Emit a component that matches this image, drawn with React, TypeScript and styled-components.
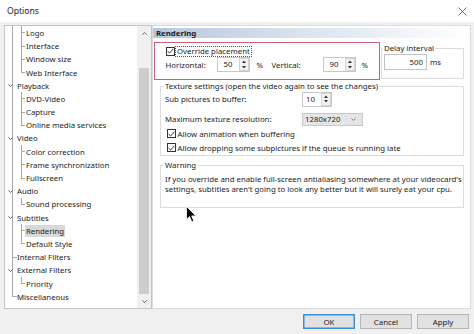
import React from 'react';
import styled, { createGlobalStyle } from 'styled-components';

const FONT = `"Noto Sans", "Open Sans", sans-serif`;
const LINE = '#a9a9a9';

const GlobalStyle = createGlobalStyle`
  *, *::before, *::after { box-sizing: border-box; }
  html, body { margin: 0; padding: 0; background: #f0f0f0; }
  body { font-family: ${FONT}; }
`;

const Window = styled.div`
  position: relative;
  width: 474px;
  height: 334px;
  background: #f0f0f0;
  display: flex;
  flex-direction: column;
  overflow: hidden;
  font-family: ${FONT};
  font-size: 7.8px;
  color: #1c1c1c;
`;

const TitleBar = styled.div`
  flex: none;
  height: 22px;
  background: #fff;
  display: flex;
  align-items: center;
  justify-content: space-between;
  padding: 0 7px 0 7px;
`;

const Title = styled.span`
  font-size: 8.6px;
  color: #222;
`;

const Body = styled.div`
  flex: none;
  height: 287px;
  display: flex;
  padding: 3px 5px 0 4px;
`;

/* ---------- tree ---------- */
const Tree = styled.div`
  flex: none;
  width: 148px;
  height: 100%;
  background: #fff;
  border: 1px solid #c4c4c4;
  display: flex;
`;

const TreeList = styled.div`
  flex: 1;
  padding-top: 0.4px;
  overflow: hidden;
`;

const Row = styled.div`
  height: 13.2px;
  display: flex;
  align-items: center;
  white-space: nowrap;
`;

const RootGuide = styled.span<{ $end?: boolean; $tick?: boolean }>`
  flex: none;
  width: 12px;
  height: 100%;
  display: flex;
  align-items: center;
  padding-left: 3px;
  background: ${p => (p.$tick ? `linear-gradient(${LINE},${LINE}) no-repeat 7px 50% / 5px 1px,` : '')}
    linear-gradient(${LINE}, ${LINE}) no-repeat 7px 0 / 1px ${p => (p.$end ? '50%' : '100%')};
`;

const ChildGuide = styled.span<{ $end?: boolean }>`
  flex: none;
  width: 9px;
  height: 100%;
  background: linear-gradient(${LINE}, ${LINE}) no-repeat 4px 50% / 4px 1px,
    linear-gradient(${LINE}, ${LINE}) no-repeat 4px 0 / 1px ${p => (p.$end ? '50%' : '100%')};
`;

const NodeLabel = styled.span<{ $sel?: boolean }>`
  margin-left: -1px;
  padding: 0 1px;
  line-height: 12px;
  background: ${p => (p.$sel ? '#d9d9d9' : 'transparent')};
  color: #1c1c1c;
`;

const ScrollBar = styled.div`
  flex: none;
  width: 14px;
  background: #f0f0f0;
  display: flex;
  flex-direction: column;
`;

const ScrollArrow = styled.div`
  flex: none;
  height: 14px;
  display: flex;
  align-items: center;
  justify-content: center;
`;

const ScrollTrack = styled.div`
  flex: 1;
  display: flex;
  flex-direction: column;
  padding: 28px 2px 0 2px;
`;

const ScrollThumb = styled.div`
  flex: 1;
  background: #cdcdcd;
`;

/* ---------- page ---------- */
const Page = styled.div`
  flex: 1;
  height: 100%;
  background: #fff;
  border: 1px solid #dcdcdc;
  padding-top: 2px;
  display: flex;
  flex-direction: column;
`;

const PageHeader = styled.div`
  height: 10px;
  padding-left: 3px;
  line-height: 10px;
  font-weight: bold;
  color: #1a1a28;
  background: linear-gradient(to right, #b8c7db 0%, #d9e2ee 45%, #ffffff 100%);
`;

const PageContent = styled.div`
  padding: 4px 6px 0 1px;
  display: flex;
  flex-direction: column;
`;

const TopRow = styled.div`
  display: flex;
  align-items: flex-start;
`;

const HighlightBox = styled.div`
  flex: none;
  width: 226px;
  height: 37.5px;
  border: 1.5px solid #c8607a;
  padding: 3px 0 0 10.5px;
  display: flex;
  flex-direction: column;
`;

const CheckLine = styled.div<{ $h?: number }>`
  height: ${p => p.$h ?? 10}px;
  display: flex;
  align-items: center;
  gap: 1.5px;
`;

const FocusText = styled.span`
  outline: 1px dotted #555;
  outline-offset: 0;
  padding: 0 1px;
  line-height: 9px;
`;

const PlacementRow = styled.div`
  margin-top: 1px;
  height: 15px;
  display: grid;
  grid-template-columns: 51px 33px 22px 51px 33px auto;
  align-items: center;
`;

const UnitLabel = styled.span<{ $pad?: number }>`
  padding-left: ${p => p.$pad ?? 7}px;
`;

const Group = styled.fieldset<{ $ml?: number; $mt?: number; $w?: number; $pl?: number }>`
  margin: ${p => p.$mt ?? 0}px 0 0 ${p => p.$ml ?? 0}px;
  ${p => (p.$w ? `width: ${p.$w}px; flex: none;` : '')}
  padding: 0 0 0 ${p => p.$pl ?? 4}px;
  border: 1px solid #dcdcdc;
  min-width: 0;
`;

const Legend = styled.legend<{ $lh?: number }>`
  padding: 0 1px;
  margin-left: -1px;
  line-height: ${p => p.$lh ?? 11}px;
  color: #1c1c1c;
`;

const DelayRow = styled.div`
  margin-top: 1px;
  height: 16px;
  margin-bottom: 8px;
  display: flex;
  align-items: center;
  gap: 3px;
`;

const TextBox = styled.div<{ $w: number }>`
  width: ${p => p.$w}px;
  height: 16px;
  border: 1px solid #c3c3c3;
  text-align: right;
  padding-right: 3px;
  line-height: 14px;
`;

const FormRow = styled.div<{ $mb?: number }>`
  display: grid;
  grid-template-columns: 137px auto;
  align-items: center;
  height: 15px;
  margin-bottom: ${p => p.$mb ?? 0}px;
`;

const SpinBox = styled.div<{ $w: number }>`
  width: ${p => p.$w}px;
  height: 15px;
  display: flex;
  border: 1px solid #c8c8c8;
  background: #fff;
`;

const SpinValue = styled.span`
  flex: 1;
  text-align: right;
  padding-right: 6px;
  line-height: 13px;
`;

const SpinButtons = styled.span`
  flex: none;
  width: 10px;
  display: flex;
  flex-direction: column;
  border: 1px solid #d4d4d4;
  background: #f2f2f2;
`;

const SpinBtn = styled.span`
  flex: 1;
  display: flex;
  align-items: center;
  justify-content: center;
`;

const Combo = styled.div`
  width: 61px;
  height: 13px;
  background: #e5e5e5;
  border: 1px solid #c9c9c9;
  display: flex;
  align-items: center;
  justify-content: space-between;
  padding: 0 6px 0 2px;
  line-height: 11px;
`;

const CheckRow = styled.div`
  height: 14px;
  display: flex;
  align-items: center;
  padding-left: 2px;
  gap: 1.5px;
`;

const WarningText = styled.p`
  margin: 0;
  padding: 3px 0 12px 0;
  line-height: 10.5px;
`;

const BoxMark = styled.span`
  flex: none;
  width: 9px;
  height: 9px;
  border: 1px solid #333;
  background: #fff;
  display: flex;
  align-items: center;
  justify-content: center;
`;

/* ---------- buttons ---------- */
const ButtonBar = styled.div`
  flex: 1;
  display: flex;
  justify-content: flex-end;
  align-items: flex-start;
  gap: 5px;
  padding: 5px 5px 0 0;
`;

const Button = styled.button<{ $default?: boolean }>`
  width: 52px;
  height: 15px;
  padding: 0;
  font-family: ${FONT};
  font-size: 7.8px;
  color: #1c1c1c;
  background: #e1e1e1;
  border: 1px solid ${p => (p.$default ? '#3d8fd1' : '#b5b5b5')};
  ${p => (p.$default ? 'box-shadow: inset 0 0 0 0.5px #3d8fd1;' : '')}
`;

const Cursor = styled.svg`
  position: absolute;
  left: 186px;
  top: 206px;
`;

/* ---------- icons ---------- */
const Check = () => (
  <svg width="7" height="6" viewBox="0 0 7 6">
    <path d="M0.6 3.1 L2.6 5 L6.4 0.8" fill="none" stroke="#222" strokeWidth="0.9" />
  </svg>
);

const CheckBox = () => (
  <BoxMark>
    <Check />
  </BoxMark>
);

const Chevron = ({ up = false, color = '#444' }: { up?: boolean; color?: string }) => (
  <svg width="5" height="3" viewBox="0 0 5 3">
    <path d={up ? 'M0.4 2.6 L2.5 0.5 L4.6 2.6' : 'M0.4 0.4 L2.5 2.5 L4.6 0.4'} fill="none" stroke={color} strokeWidth="0.9" />
  </svg>
);

const Tri = ({ up }: { up?: boolean }) => (
  <svg width="4" height="3" viewBox="0 0 4 3">
    <path d={up ? 'M0 3 L2 0.5 L4 3 Z' : 'M0 0 L2 2.5 L4 0 Z'} fill="#333" />
  </svg>
);

const Spin = ({ value, w }: { value: string; w: number }) => (
  <SpinBox $w={w}>
    <SpinValue>{value}</SpinValue>
    <SpinButtons>
      <SpinBtn>
        <Tri up />
      </SpinBtn>
      <SpinBtn>
        <Tri />
      </SpinBtn>
    </SpinButtons>
  </SpinBox>
);

type Node = { t: string; l: 0 | 1; exp?: boolean; last?: boolean; sel?: boolean; end?: boolean };

const tree: Node[] = [
  { t: 'Logo', l: 1 },
  { t: 'Interface', l: 1 },
  { t: 'Window size', l: 1 },
  { t: 'Web Interface', l: 1, last: true },
  { t: 'Playback', l: 0, exp: true },
  { t: 'DVD-Video', l: 1 },
  { t: 'Capture', l: 1 },
  { t: 'Online media services', l: 1, last: true },
  { t: 'Video', l: 0, exp: true },
  { t: 'Color correction', l: 1 },
  { t: 'Frame synchronization', l: 1 },
  { t: 'Fullscreen', l: 1, last: true },
  { t: 'Audio', l: 0, exp: true },
  { t: 'Sound processing', l: 1, last: true },
  { t: 'Subtitles', l: 0, exp: true },
  { t: 'Rendering', l: 1, sel: true },
  { t: 'Default Style', l: 1, last: true },
  { t: 'Internal Filters', l: 0 },
  { t: 'External Filters', l: 0, exp: true },
  { t: 'Priority', l: 1, last: true },
  { t: 'Miscellaneous', l: 0, end: true },
];

export default function App() {
  return (
    <>
      <GlobalStyle />
      <Window>
        <TitleBar>
          <Title>Options</Title>
          <svg width="9" height="9" viewBox="0 0 9 9">
            <path d="M0.5 0.5 L8.5 8.5 M8.5 0.5 L0.5 8.5" stroke="#555" strokeWidth="0.8" />
          </svg>
        </TitleBar>

        <Body>
          <Tree>
            <TreeList>
              {tree.map(n => (
                <Row key={n.t}>
                  <RootGuide $end={n.end} $tick={n.l === 0 && !n.exp}>
                    {n.l === 0 && n.exp ? <Chevron color="#555" /> : null}
                  </RootGuide>
                  {n.l === 1 ? <ChildGuide $end={n.last} /> : null}
                  <NodeLabel $sel={n.sel}>{n.t}</NodeLabel>
                </Row>
              ))}
            </TreeList>
            <ScrollBar>
              <ScrollArrow>
                <Chevron up color="#555" />
              </ScrollArrow>
              <ScrollTrack>
                <ScrollThumb />
              </ScrollTrack>
              <ScrollArrow>
                <Chevron color="#555" />
              </ScrollArrow>
            </ScrollBar>
          </Tree>

          <Page>
            <PageHeader>Rendering</PageHeader>
            <PageContent>
              <TopRow>
                <HighlightBox>
                  <CheckLine>
                    <CheckBox />
                    <FocusText>Override placement</FocusText>
                  </CheckLine>
                  <PlacementRow>
                    <span>Horizontal:</span>
                    <Spin value="50" w={33} />
                    <UnitLabel>%</UnitLabel>
                    <span>Vertical:</span>
                    <Spin value="90" w={33} />
                    <UnitLabel $pad={6}>%</UnitLabel>
                  </PlacementRow>
                </HighlightBox>
                <Group $ml={1} $mt={2} $w={83} $pl={2}>
                  <Legend $lh={9}>Delay interval</Legend>
                  <DelayRow>
                    <TextBox $w={43}>500</TextBox>
                    <span>ms</span>
                  </DelayRow>
                </Group>
              </TopRow>

              <Group $ml={6} $mt={1}>
                <Legend>Texture settings (open the video again to see the changes)</Legend>
                <FormRow $mb={5}>
                  <span>Sub pictures to buffer:</span>
                  <Spin value="10" w={30} />
                </FormRow>
                <FormRow>
                  <span>Maximum texture resolution:</span>
                  <Combo>
                    <span>1280x720</span>
                    <Chevron color="#777" />
                  </Combo>
                </FormRow>
                <CheckRow>
                  <CheckBox />
                  <span>Allow animation when buffering</span>
                </CheckRow>
                <CheckRow>
                  <CheckBox />
                  <span>Allow dropping some subpictures if the queue is running late</span>
                </CheckRow>
              </Group>

              <Group $ml={6} $mt={4}>
                <Legend>Warning</Legend>
                <WarningText>
                  If you override and enable full-screen antialiasing somewhere at your videocard's
                  <br />
                  settings, subtitles aren't going to look any better but it will surely eat your cpu.
                </WarningText>
              </Group>
            </PageContent>
          </Page>
        </Body>

        <ButtonBar>
          <Button $default>OK</Button>
          <Button>Cancel</Button>
          <Button>Apply</Button>
        </ButtonBar>

        <Cursor width="11" height="17" viewBox="0 0 11 17">
          <path
            d="M0.5 0.5 L0.5 13.5 L3.6 10.6 L5.8 15.8 L7.8 14.9 L5.7 9.9 L9.9 9.9 Z"
            fill="#000"
            stroke="#fff"
            strokeWidth="0.8"
          />
        </Cursor>
      </Window>
    </>
  );
}
